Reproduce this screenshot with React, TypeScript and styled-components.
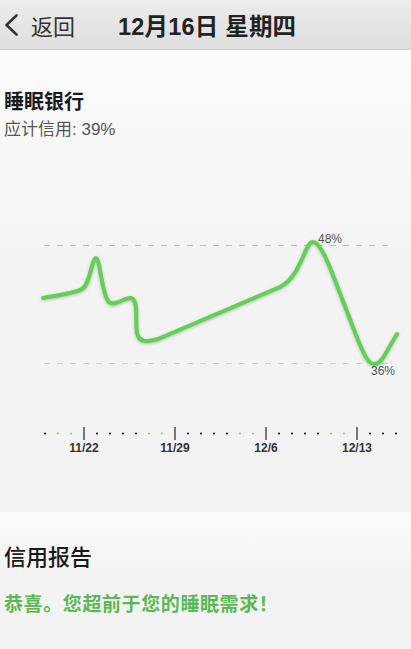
import React from "react";
import styled, { createGlobalStyle } from "styled-components";

const GlobalStyle = createGlobalStyle`
  html, body {
    margin: 0;
    padding: 0;
    background: #f3f3f3;
    font-family: "Liberation Sans", "Noto Sans CJK SC", sans-serif;
  }
`;

const Page = styled.div`
  width: 411px;
  height: 649px;
  overflow: hidden;
  display: flex;
  flex-direction: column;
`;

const NavBar = styled.header`
  height: 49px;
  flex: none;
  display: flex;
  align-items: center;
  background: linear-gradient(#ececec, #dedede);
  border-bottom: 1px solid #cfcfcf;
  color: #222;
`;

const BackButton = styled.button`
  display: flex;
  align-items: center;
  gap: 12px;
  padding: 0 0 0 4px;
  border: none;
  background: none;
  font-family: inherit;
  font-size: 22px;
  color: #333;
  width: 118px;
  height: 100%;
`;

const NavTitle = styled.h1`
  margin: 0;
  font-size: 23.5px;
  font-weight: 700;
  letter-spacing: 0.2px;
`;

const Section = styled.section<{ $height?: number }>`
  flex: ${(p) => (p.$height ? "none" : "1")};
  height: ${(p) => (p.$height ? `${p.$height}px` : "auto")};
  display: flex;
  flex-direction: column;
  padding: 0 4px;
  background: linear-gradient(#fcfcfc, #f3f3f3 45%);
`;

const BankTitle = styled.h2`
  margin: 40px 0 0;
  font-size: 20px;
  line-height: 25px;
  font-weight: 700;
  color: #1a1a1a;
`;

const Accrued = styled.div`
  margin-top: 4px;
  font-size: 17px;
  line-height: 21px;
  color: #555;
`;

const ChartSvg = styled.svg`
  display: block;
  margin: 80px 0 0 -4px;
  overflow: visible;
`;

const Curve = styled.path`
  fill: none;
  stroke: #5fd253;
  stroke-width: 4;
  stroke-linecap: round;
  stroke-linejoin: round;
  filter: drop-shadow(0 1px 1.5px rgba(0, 0, 0, 0.25));
`;

const Guide = styled.line<{ $color: string }>`
  stroke: ${(p) => p.$color};
  stroke-width: 1;
  stroke-dasharray: 6 7;
`;

const PctLabel = styled.text`
  font-family: "Liberation Sans", sans-serif;
  font-size: 12px;
  fill: #555;
`;

const DateLabel = styled.text`
  font-family: "Liberation Sans", sans-serif;
  font-size: 12px;
  font-weight: 700;
  fill: #333;
`;

const ReportTitle = styled.h2`
  margin: 33px 0 0;
  font-size: 22px;
  line-height: 26px;
  font-weight: 500;
  color: #1a1a1a;
`;

const Congrats = styled.p`
  margin: 22px 0 0;
  font-size: 19px;
  line-height: 24px;
  font-weight: 700;
  letter-spacing: 0.6px;
  color: #5cb853;
`;

const TOP = 220;
const curve = `M43,298 C60,295 75,293 82,289 C90,285 92,258 96,258 C100,258 102,296 109,302
C115,307 124,297 131,298 C139,300 135,320 137,333 C139,343 148,342 158,339 L280,287
C292,281 298,268 303,257 C306,250 309,242 313,242 C318,242 324,252 333,275 L358,340
C363,352 368,365 375,364 C382,364 388,348 397,334`;

const ticks = [
  { x: 84, label: "11/22" },
  { x: 175, label: "11/29" },
  { x: 266, label: "12/6" },
  { x: 357, label: "12/13" },
];

// dots between ticks, 13px apart; the two before each tick are green
const dots = Array.from({ length: 28 }, (_, i) => 45 + i * 13).filter(
  (x) => !ticks.some((t) => t.x === x)
);
const isGreen = (x: number) => ticks.some((t) => t.x - x === 13 || t.x - x === 26);

const SleepChart = () => (
  <ChartSvg width={411} height={240} viewBox={`0 ${TOP} 411 240`}>
    <Guide x1={44} x2={390} y1={245.5} y2={245.5} $color="#a9c2e4" />
    <Guide x1={44} x2={390} y1={363.5} y2={363.5} $color="#aee3a6" />
    <Curve d={curve} />
    <PctLabel x={318} y={243}>48%</PctLabel>
    <PctLabel x={371} y={375}>36%</PctLabel>
    {dots.map((x) => (
      <circle key={x} cx={x} cy={433.5} r={1.1} fill={isGreen(x) ? "#8fd860" : "#222"} />
    ))}
    {ticks.map((t) => (
      <g key={t.label}>
        <line x1={t.x} x2={t.x} y1={427} y2={440} stroke="#333" strokeWidth={1.3} />
        <DateLabel x={t.x} y={452} textAnchor="middle">
          {t.label}
        </DateLabel>
      </g>
    ))}
  </ChartSvg>
);

export default function App() {
  return (
    <Page>
      <GlobalStyle />
      <NavBar>
        <BackButton>
          <svg width="15" height="22" viewBox="0 0 15 22">
            <path d="M12.5 1.5 L2.5 11 L12.5 20.5" fill="none" stroke="#333" strokeWidth="2.6" strokeLinecap="round" strokeLinejoin="round" />
          </svg>
          返回
        </BackButton>
        <NavTitle>12月16日 星期四</NavTitle>
      </NavBar>
      <Section $height={462}>
        <BankTitle>睡眠银行</BankTitle>
        <Accrued>应计信用: 39%</Accrued>
        <SleepChart />
      </Section>
      <Section>
        <ReportTitle>信用报告</ReportTitle>
        <Congrats>恭喜。您超前于您的睡眠需求！</Congrats>
      </Section>
    </Page>
  );
}
